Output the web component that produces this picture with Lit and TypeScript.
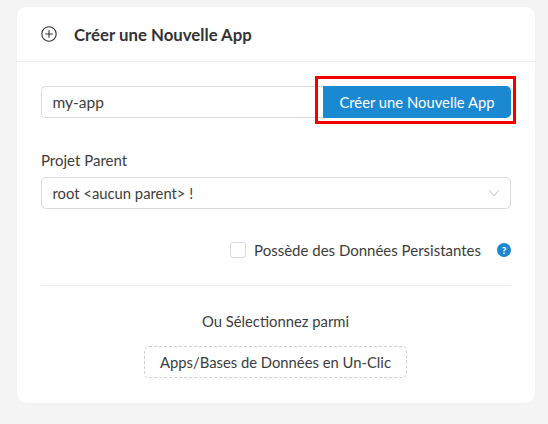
import { LitElement, html, css } from "lit";
import { customElement } from "lit/decorators.js";

@customElement("app-root")
export class AppRoot extends LitElement {
  static styles = css`
    :host {
      display: block;
      width: 548px;
      height: 424px;
      background: #f4f4f4;
      font-family: Lato, "Noto Sans", sans-serif;
      font-size: 15px;
      color: #333;
      box-sizing: border-box;
      padding: 7px 13px 21px 17px;
      overflow: hidden;
    }
    * { box-sizing: border-box; }
    .card {
      background: #fff;
      border-radius: 8px;
      height: 396px;
      box-shadow: 0 0 1px rgba(0,0,0,0.12);
      display: flex;
      flex-direction: column;
    }
    .head {
      height: 55px;
      border-bottom: 1px solid #eee;
      display: flex;
      align-items: center;
      gap: 17px;
      padding: 0 24px;
      font-size: 16.8px;
      font-weight: 700;
      color: #333;
    }
    .head svg { display: block; flex: none; }
    .body { padding: 24px 24px 0; display: flex; flex-direction: column; }
    .row { display: flex; height: 32px; }
    .field {
      border: 1px solid #d9d9d9;
      border-radius: 5px;
      height: 32px;
      display: flex;
      align-items: center;
      padding: 0 10.5px;
      color: #3c3c3c;
      background: #fff;
    }
    .name { flex: 1; border-radius: 5px 0 0 5px; border-right: 0; font-size: 15.5px; }
    .btn-wrap { position: relative; width: 188px; }
    .primary {
      width: 100%;
      height: 32px;
      border: 0;
      border-radius: 0 5px 5px 0;
      background: #1b88d2;
      color: #fff;
      font: inherit;
      font-size: 14.8px;
      padding: 0;
    }
    .mark {
      position: absolute;
      left: -8.5px;
      top: -10.5px;
      width: 201.5px;
      height: 48.5px;
      border: 3px solid #f00000;
      pointer-events: none;
    }
    .label { margin-top: 32px; height: 27px; line-height: 20px; color: #3c3c3c; }
    .select { justify-content: space-between; padding-right: 10px; font-size: 14.8px; }
    .check {
      margin-top: 33px;
      height: 16px;
      display: flex;
      align-items: center;
      justify-content: flex-end;
      color: #3c3c3c;
    }
    .box {
      width: 16px; height: 16px;
      border: 1px solid #d9d9d9;
      border-radius: 3px;
      margin-right: 8px;
    }
    .help {
      width: 14px; height: 14px;
      border-radius: 50%;
      background: #1b88d2;
      color: #fff;
      font-size: 10px;
      font-weight: 900;
      display: flex;
      align-items: center;
      justify-content: center;
      margin-left: 16px;
    }
    .divider { height: 1px; background: #eee; margin-top: 27px; }
    .or { margin-top: 25px; text-align: center; line-height: 20px; color: #3c3c3c; margin-right: 1px; font-size: 14.8px; }
    .center { display: flex; justify-content: center; margin-top: 15px; padding-right: 1px; }
    .dashed {
      width: 263px;
      height: 32px;
      border: 1px dashed #d0d0d0;
      border-radius: 5px;
      background: #fff;
      color: #3c3c3c;
      font: inherit;
      font-size: 14.8px;
      padding: 0;
      box-shadow: 0 2px 0 rgba(0,0,0,0.015);
    }
  `;

  render() {
    return html`
      <div class="card">
        <div class="head">
          <svg width="16" height="16" viewBox="0 0 16 16" fill="none" stroke="#333" stroke-width="1.1">
            <circle cx="8" cy="8" r="7.2"></circle>
            <path d="M8 4.2v7.6M4.2 8h7.6"></path>
          </svg>
          <span>Créer une Nouvelle App</span>
        </div>
        <div class="body">
          <div class="row">
            <div class="field name">my-app</div>
            <div class="btn-wrap">
              <button class="primary">Créer une Nouvelle App</button>
              <div class="mark"></div>
            </div>
          </div>
          <div class="label">Projet Parent</div>
          <div class="field select">
            <span>root &lt;aucun parent&gt; !</span>
            <svg width="12" height="8" viewBox="0 0 12 8" fill="none" stroke="#c4c4c4" stroke-width="1">
              <path d="M1 1l5 6 5-6"></path>
            </svg>
          </div>
          <div class="check">
            <span class="box"></span>
            <span>Possède des Données Persistantes</span>
            <span class="help">?</span>
          </div>
          <div class="divider"></div>
          <div class="or">Ou Sélectionnez parmi</div>
          <div class="center"><button class="dashed">Apps/Bases de Données en Un-Clic</button></div>
        </div>
      </div>
    `;
  }
}
